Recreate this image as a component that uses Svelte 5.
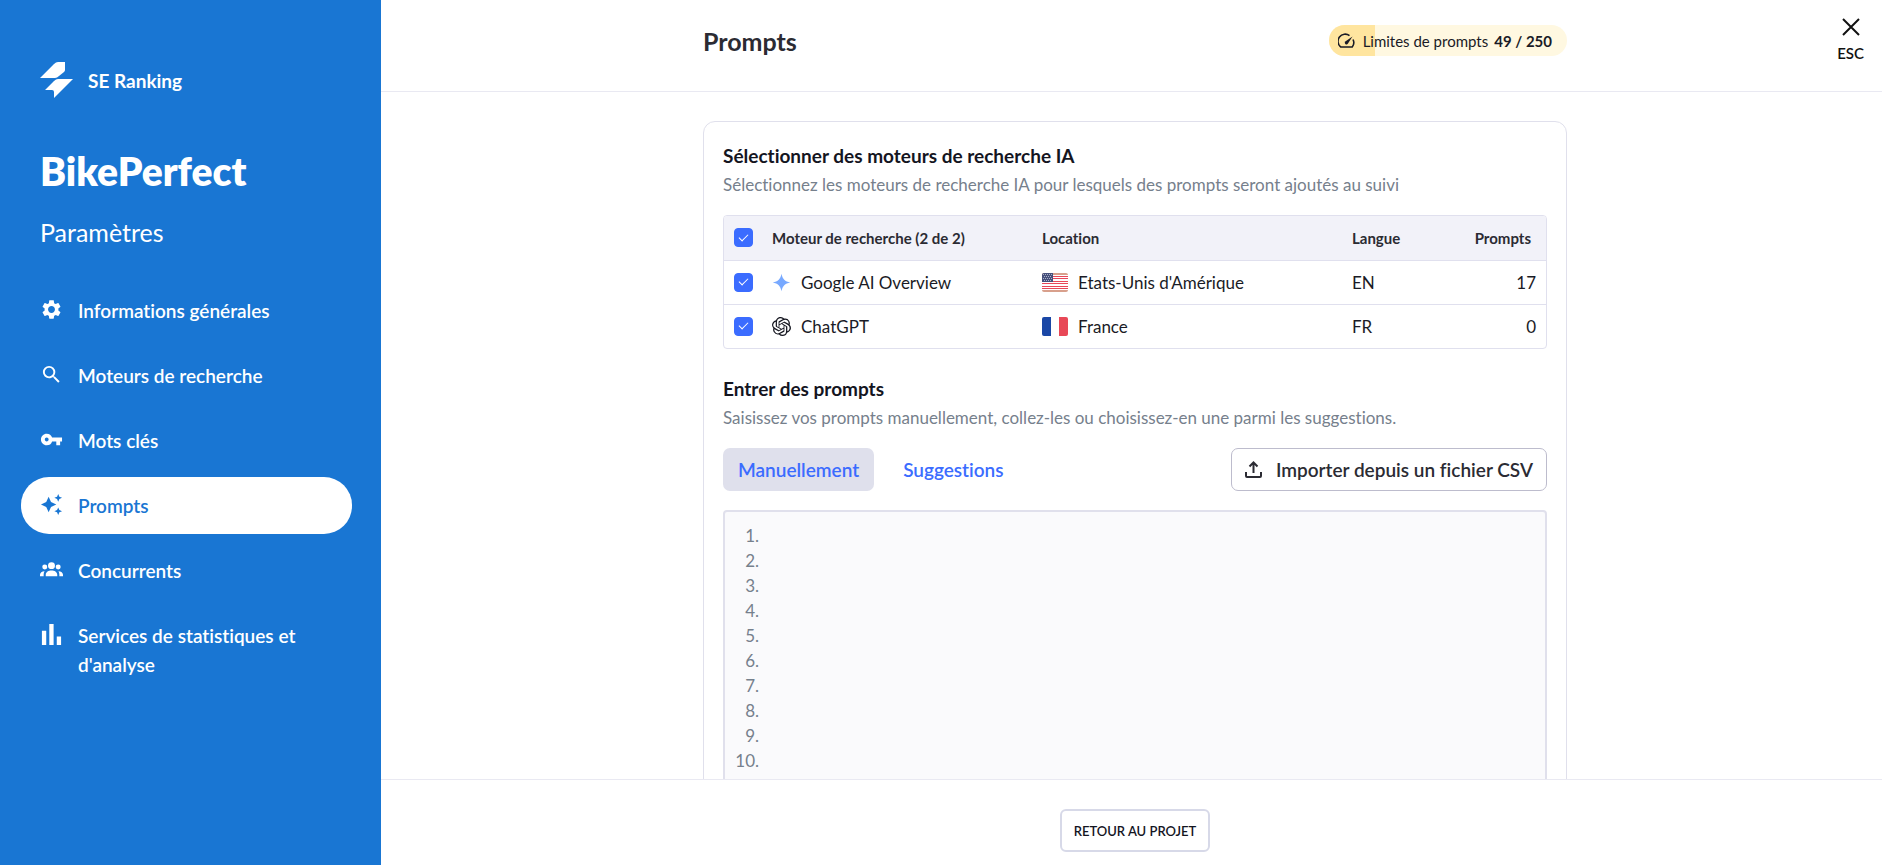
<script lang="ts">
  type Engine = {
    id: string;
    name: string;
    flag: 'us' | 'fr';
    location: string;
    lang: string;
    prompts: number;
    checked: boolean;
  };

  const navItems = [
    { icon: 'settings', label: 'Informations générales' },
    { icon: 'search', label: 'Moteurs de recherche' },
    { icon: 'key', label: 'Mots clés' },
    { icon: 'sparkles', label: 'Prompts' },
    { icon: 'groups', label: 'Concurrents' },
    { icon: 'chart', label: "Services de statistiques et d'analyse" },
  ];

  let activeNav = $state('sparkles');
  let tab = $state<'manual' | 'suggestions'>('manual');
  let promptText = $state('');
  let engines = $state<Engine[]>([
    { id: 'aio', name: 'Google AI Overview', flag: 'us', location: "Etats-Unis d'Amérique", lang: 'EN', prompts: 17, checked: true },
    { id: 'gpt', name: 'ChatGPT', flag: 'fr', location: 'France', lang: 'FR', prompts: 0, checked: true },
  ]);

  const used = 49;
  const limit = 250;
  const minLines = 10;

  let selectedCount = $derived(engines.filter((e) => e.checked).length);
  let lines = $derived(Math.max(minLines, promptText.split('\n').length));

  function toggleAll(event: Event) {
    const on = (event.currentTarget as HTMLInputElement).checked;
    engines.forEach((e) => (e.checked = on));
  }
</script>

<div class="layout">
  <aside class="sidebar">
    <a class="brand" href="#home">
      <svg width="33" height="37" viewBox="0 0 33 37" fill="#fff" aria-hidden="true">
        <path d="M0 16 14 2q2-2 4-2h7v8q0 1-1 2l-5 4q-2 2-4 2z" />
        <path d="M33 17 14 36v-6q0-2-2-2H5l9-9q2-2 4-2z" />
      </svg>
      <span>SE Ranking</span>
    </a>
    <h1>BikePerfect</h1>
    <p class="subtitle">Paramètres</p>

    <nav aria-label="Paramètres">
      {#each navItems as item}
        <a
          href={`#${item.icon}`}
          class:active={item.icon === activeNav}
          aria-current={item.icon === activeNav ? 'page' : undefined}
          onclick={() => (activeNav = item.icon)}
        >
          <svg viewBox="0 0 24 24" fill="currentColor" aria-hidden="true">
            {#if item.icon === 'settings'}
              <path d="M19.14 12.94c.04-.3.06-.61.06-.94 0-.32-.02-.64-.07-.94l2.03-1.58c.18-.14.23-.41.12-.61l-1.92-3.32c-.12-.22-.37-.29-.59-.22l-2.39.96c-.5-.38-1.03-.7-1.62-.94l-.36-2.54c-.04-.24-.24-.41-.48-.41h-3.84c-.24 0-.43.17-.47.41l-.36 2.54c-.59.24-1.13.57-1.62.94l-2.39-.96c-.22-.08-.47 0-.59.22L2.74 8.87c-.12.21-.08.47.12.61l2.03 1.58c-.05.3-.09.63-.09.94s.02.64.07.94l-2.03 1.58c-.18.14-.23.41-.12.61l1.92 3.32c.12.22.37.29.59.22l2.39-.96c.5.38 1.03.7 1.62.94l.36 2.54c.05.24.24.41.48.41h3.84c.24 0 .44-.17.47-.41l.36-2.54c.59-.24 1.13-.56 1.62-.94l2.39.96c.22.08.47 0 .59-.22l1.92-3.32c.12-.22.07-.47-.12-.61l-2.01-1.58zM12 15.6c-1.98 0-3.6-1.62-3.6-3.6s1.62-3.6 3.6-3.6 3.6 1.62 3.6 3.6-1.62 3.6-3.6 3.6z" />
            {:else if item.icon === 'search'}
              <path d="M15.5 14h-.79l-.28-.27A6.47 6.47 0 0 0 16 9.5 6.5 6.5 0 1 0 9.5 16c1.61 0 3.09-.59 4.23-1.57l.27.28v.79l5 4.99L20.49 19l-4.99-5zm-6 0C7.01 14 5 11.99 5 9.5S7.01 5 9.5 5 14 7.01 14 9.5 11.99 14 9.5 14z" />
            {:else if item.icon === 'key'}
              <path d="M12.65 10A5.99 5.99 0 0 0 7 6c-3.31 0-6 2.69-6 6s2.69 6 6 6a5.99 5.99 0 0 0 5.65-4H17v4h4v-4h2v-4H12.65zM7 14c-1.1 0-2-.9-2-2s.9-2 2-2 2 .9 2 2-.9 2-2 2z" />
            {:else if item.icon === 'sparkles'}
              <path d="M9 4l2.5 5.5L17 12l-5.500 2.500L9 20l-2.500-5.500L1 12l5.500-2.500zM19 1l1.200 2.800L23 5l-2.800 1.200L19 9l-1.200-2.800L15 5l2.800-1.200zM19 15l1.200 2.800L23 19l-2.800 1.200L19 23l-1.200-2.800L15 19l2.800-1.200z" />
            {:else if item.icon === 'groups'}
              <circle cx="12" cy="8" r="3.6" />
              <circle cx="5" cy="9.5" r="2.6" />
              <circle cx="19" cy="9.5" r="2.6" />
              <path d="M6 19v-1.500c0-3 3-4.500 6-4.500s6 1.500 6 4.500V19zM0 19v-1.500c0-2.300 2-3.700 4.800-3.800-.7 1-1 2.200-1 3.800V19zM24 19v-1.500c0-2.300-2-3.700-4.800-3.800.7 1 1 2.200 1 3.800V19z" />
            {:else}
              <path d="M2 8h4.500v15H2zM9.700 1h4.500v22H9.700zM17.500 14H22v9h-4.500z" />
            {/if}
          </svg>
          <span>{item.label}</span>
        </a>
      {/each}
    </nav>
  </aside>

  <div class="main">
    <header class="topbar">
      <div class="topbar__inner">
        <h2>Prompts</h2>
        <div class="limits">
          <div class="limits__fill" style={`width: ${(used / limit) * 100}%`}></div>
          <svg width="17" height="16" viewBox="0 0 17 16" fill="none" stroke="currentColor" stroke-width="1.6" aria-hidden="true">
            <path d="M11.500 2.600A7 7 0 0 0 2.800 14h11.400a7 7 0 0 0 .8-7.500" stroke-linejoin="round" />
            <path d="M14.500 3.500 9.800 10.800a1.700 1.700 0 1 1-2.500-2.300z" fill="currentColor" stroke="none" />
          </svg>
          <span>Limites de prompts</span>
          <strong>{used} / {limit}</strong>
        </div>
      </div>
      <button class="close" type="button">
        <svg width="18" height="18" viewBox="0 0 18 18" stroke="currentColor" stroke-width="2" aria-hidden="true">
          <path d="M1 1 17 17M17 1 1 17" />
        </svg>
        <span>ESC</span>
      </button>
    </header>

    <main class="content">
      <section class="card">
        <h3>Sélectionner des moteurs de recherche IA</h3>
        <p class="hint">Sélectionnez les moteurs de recherche IA pour lesquels des prompts seront ajoutés au suivi</p>

        <div class="table-wrap">
          <table>
            <thead>
              <tr>
                <th class="col-check">
                  <input type="checkbox" aria-label="Tout sélectionner" checked={selectedCount === engines.length} onchange={toggleAll} />
                </th>
                <th class="col-engine">Moteur de recherche ({selectedCount} de {engines.length})</th>
                <th>Location</th>
                <th class="col-lang">Langue</th>
                <th class="num">Prompts</th>
              </tr>
            </thead>
            <tbody>
              {#each engines as engine}
                <tr>
                  <td class="col-check"><input type="checkbox" id={engine.id} bind:checked={engine.checked} /></td>
                  <td>
                    <label class="cell" for={engine.id}>
                      {#if engine.id === 'aio'}
                        <svg width="19" height="19" viewBox="0 0 24 24" fill="#78a9ff" aria-hidden="true">
                          <path d="M12 1c1.200 6.500 4.500 9.800 11 11-6.500 1.200-9.800 4.500-11 11-1.200-6.500-4.500-9.800-11-11C7.500 10.800 10.800 7.500 12 1z" />
                        </svg>
                      {:else}
                        <svg width="19" height="19" viewBox="0 0 24 24" fill="#14151f" aria-hidden="true">
                          <path d="M22.2819 9.8211a5.9847 5.9847 0 0 0-.5157-4.9108 6.0462 6.0462 0 0 0-6.5098-2.9A6.0651 6.0651 0 0 0 4.9807 4.1818a5.9847 5.9847 0 0 0-3.9977 2.9 6.0462 6.0462 0 0 0 .7427 7.0966 5.98 5.98 0 0 0 .511 4.9107 6.051 6.051 0 0 0 6.5146 2.9001A5.9847 5.9847 0 0 0 13.2599 24a6.0557 6.0557 0 0 0 5.7718-4.2058 5.9894 5.9894 0 0 0 3.9977-2.9001 6.0557 6.0557 0 0 0-.7475-7.073zm-9.022 12.6081a4.4755 4.4755 0 0 1-2.8764-1.0408l.1419-.0804 4.7783-2.7582a.7948.7948 0 0 0 .3927-.6813v-6.7369l2.02 1.1686a.071.071 0 0 1 .038.052v5.5826a4.504 4.504 0 0 1-4.4945 4.4944zm-9.6607-4.1254a4.4708 4.4708 0 0 1-.5346-3.0137l.142.0852 4.783 2.7582a.7712.7712 0 0 0 .7806 0l5.8428-3.3685v2.3324a.0804.0804 0 0 1-.0332.0615L9.74 19.9502a4.4992 4.4992 0 0 1-6.1408-1.6464zM2.3408 7.8956a4.485 4.485 0 0 1 2.3655-1.9728V11.6a.7664.7664 0 0 0 .3879.6765l5.8144 3.3543-2.0201 1.1685a.0757.0757 0 0 1-.071 0l-4.8303-2.7865A4.504 4.504 0 0 1 2.3408 7.872zm16.5963 3.8558L13.1038 8.364 15.1192 7.2a.0757.0757 0 0 1 .071 0l4.8303 2.7913a4.4944 4.4944 0 0 1-.6765 8.1042v-5.6772a.79.79 0 0 0-.407-.667zm2.0107-3.0231l-.142-.0852-4.7735-2.7818a.7759.7759 0 0 0-.7854 0L9.409 9.2297V6.8974a.0662.0662 0 0 1 .0284-.0615l4.8303-2.7866a4.4992 4.4992 0 0 1 6.6802 4.66zM8.3065 12.863l-2.02-1.1638a.0804.0804 0 0 1-.038-.0567V6.0742a4.4992 4.4992 0 0 1 7.3757-3.4537l-.142.0805L8.704 5.459a.7948.7948 0 0 0-.3927.6813zm1.0976-2.3654l2.602-1.4998 2.6069 1.4998v2.9994l-2.5974 1.4997-2.6067-1.4997Z" />
                        </svg>
                      {/if}
                      <span>{engine.name}</span>
                    </label>
                  </td>
                  <td>
                    <div class="cell">
                      <svg class="flag" width="26" height="19" viewBox="0 0 26 19" aria-hidden="true">
                        {#if engine.flag === 'us'}
                          <path fill="#d8a08c" d="M0 0h26v19H0z" />
                          <path fill="#fff" d="M0 2h26v15H0z" />
                          <path stroke="#e8475a" d="M11 3.500h15M11 5.500h15M11 8.500h15M0 10.500h26M0 13.500h26M0 15.500h26" />
                          <path fill="#46507c" d="M0 0h11v9H0z" />
                          <path stroke="#aab0c8" stroke-dasharray="1 1" d="M1 1.500h9M2 3.500h8M1 5.500h9M2 7.500h8" />
                        {:else}
                          <path fill="#fff" d="M0 0h26v19H0z" />
                          <path fill="#1a47a6" d="M0 0h9v19H0z" />
                          <path fill="#e84857" d="M17 0h9v19h-9z" />
                        {/if}
                      </svg>
                      <span>{engine.location}</span>
                    </div>
                  </td>
                  <td>{engine.lang}</td>
                  <td class="num">{engine.prompts}</td>
                </tr>
              {/each}
            </tbody>
          </table>
        </div>

        <h3>Entrer des prompts</h3>
        <p class="hint">Saisissez vos prompts manuellement, collez-les ou choisissez-en une parmi les suggestions.</p>

        <div class="toolbar">
          <button class="tab" class:selected={tab === 'manual'} type="button" onclick={() => (tab = 'manual')}>Manuellement</button>
          <button class="tab" class:selected={tab === 'suggestions'} type="button" onclick={() => (tab = 'suggestions')}>Suggestions</button>
          <button class="import" type="button">
            <svg width="17" height="17" viewBox="0 0 17 17" fill="none" stroke="currentColor" stroke-width="2" aria-hidden="true">
              <path d="M1 11v4q0 1 1 1h13q1 0 1-1v-4M8.500 12V2M4.500 5.500l4-4 4 4" />
            </svg>
            <span>Importer depuis un fichier CSV</span>
          </button>
        </div>

        <div class="editor">
          <ol aria-hidden="true">
            {#each Array(lines) as _, i}
              <li>{i + 1}.</li>
            {/each}
          </ol>
          <textarea aria-label="Prompts" rows={lines} bind:value={promptText}></textarea>
        </div>
      </section>
    </main>

    <footer class="bottombar">
      <button class="back" type="button">RETOUR AU PROJET</button>
    </footer>
  </div>
</div>

<style>
  :global(body) {
    margin: 0;
    background: #fff;
    color: #1a1b26;
    font-family: Lato, 'Open Sans', 'Liberation Sans', sans-serif;
    font-size: 17px;
    font-variant-ligatures: none;
  }
  h1, h2, h3, p, ol { margin: 0; padding: 0; }
  button, textarea { font: inherit; color: inherit; }
  button { cursor: pointer; }

  .layout {
    display: grid;
    grid-template-columns: 381px minmax(0, 1fr);
    height: 100vh;
    overflow: hidden;
  }

  .sidebar {
    padding: 62px 29px 0 21px;
    background: #1976d3;
    color: #fff;
    overflow: hidden;
  }
  .sidebar a { color: inherit; text-decoration: none; }
  .brand {
    display: flex;
    align-items: center;
    gap: 15px;
    margin-left: 19px;
    font-size: 19px;
    font-weight: 700;
    line-height: 37px;
  }
  h1 {
    margin: 48px 0 0 19px;
    font-size: 39px;
    font-weight: 800;
    line-height: 48px;
  }
  .subtitle {
    margin: 22px 0 0 19px;
    font-size: 25px;
    line-height: 30px;
  }
  nav {
    display: grid;
    gap: 8px;
    margin-top: 35px;
  }
  nav a {
    display: flex;
    align-items: flex-start;
    gap: 15px;
    padding: 14px 19px;
    border-radius: 28px;
    font-size: 19px;
    font-weight: 600;
    line-height: 29px;
  }
  nav a.active { background: #fff; color: #1976d3; }
  nav svg { flex: none; width: 23px; height: 27px; }

  .main {
    display: flex;
    flex-direction: column;
    min-height: 0;
  }
  .topbar {
    display: grid;
    grid-template-columns: 1fr minmax(0, 864px) 1fr;
    padding-left: 7px;
    height: 91px;
    border-bottom: 1px solid #e9e9f2;
  }
  .topbar__inner {
    grid-column: 2;
    display: flex;
    justify-content: space-between;
    align-items: center;
    height: 81px;
  }
  h2 {
    color: #2b2b33;
    font-size: 25px;
    font-weight: 700;
    line-height: 30px;
  }
  .limits {
    position: relative;
    display: flex;
    align-items: center;
    height: 31px;
    padding: 0 15px 0 9px;
    border-radius: 16px;
    background: #fff8e1;
    overflow: hidden;
    font-size: 15px;
  }
  .limits__fill {
    position: absolute;
    inset: 0 auto 0 0;
    background: #ffe59f;
  }
  .limits svg, .limits span, .limits strong { position: relative; }
  .limits span { margin: 0 6px 0 8px; }
  .close {
    justify-self: end;
    align-self: start;
    display: grid;
    justify-items: center;
    gap: 8px;
    margin: 18px 18px 0 0;
    padding: 0;
    border: 0;
    background: none;
    color: #111;
    font-size: 15px;
    font-weight: 600;
    line-height: 18px;
  }

  .content {
    flex: 1;
    min-height: 0;
    overflow-y: auto;
    scrollbar-width: none;
    padding: 29px 0 29px 7px;
  }
  .card {
    box-sizing: border-box;
    max-width: 864px;
    margin: 0 auto;
    padding: 22px 19px;
    border: 1px solid #e0e0ec;
    border-radius: 12px;
  }
  h3 {
    color: #14151f;
    font-size: 19px;
    font-weight: 700;
    line-height: 24px;
  }
  .hint {
    margin-top: 4px;
    color: #76808c;
    line-height: 26px;
  }

  .table-wrap {
    margin: 17px 0 28px;
    border: 1px solid #e0e0ee;
    border-radius: 4px;
    overflow: hidden;
  }
  table {
    width: 100%;
    border-collapse: collapse;
    table-layout: fixed;
  }
  th, td {
    box-sizing: border-box;
    height: 44px;
    padding: 0;
    text-align: left;
  }
  th {
    background: #f2f2f9;
    color: #2b2b33;
    font-size: 15px;
    font-weight: 700;
  }
  tbody td { border-top: 1px solid #e0e0ee; }
  .col-check { width: 48px; padding-left: 10px; }
  .col-engine { width: 270px; }
  .col-lang { width: 114px; }
  .num { width: 80px; text-align: right; }
  th.num { padding-right: 15px; }
  td.num { padding-right: 10px; }
  .cell { display: flex; align-items: center; gap: 10px; }
  .flag { border-radius: 2px; }

  input[type='checkbox'] {
    appearance: none;
    display: grid;
    place-items: center;
    width: 19px;
    height: 19px;
    margin: 0;
    border: 1px solid #b9bacb;
    border-radius: 4px;
  }
  input[type='checkbox']:checked { border-color: #3b6cff; background: #3b6cff; }
  input[type='checkbox']:checked::after {
    content: '';
    width: 8px;
    height: 4px;
    margin-bottom: 3px;
    border: solid #fff;
    border-width: 0 0 1px 1px;
    transform: rotate(-45deg);
  }

  .toolbar {
    display: flex;
    gap: 14px;
    margin: 17px 0 19px;
  }
  .tab, .import {
    height: 43px;
    border-radius: 7px;
    font-size: 19px;
    font-weight: 600;
  }
  .tab {
    padding: 0 15px;
    border: 0;
    background: none;
    color: #3b6cff;
  }
  .tab.selected { background: #dfe0ec; }
  .import {
    display: flex;
    align-items: center;
    gap: 14px;
    margin-left: auto;
    padding: 0 13px;
    border: 1px solid #bdbccd;
    background: #fff;
    color: #2b2b33;
  }

  .editor {
    display: flex;
    min-height: 360px;
    padding: 11px 12px 11px 0;
    border: 2px solid #e0e0ec;
    border-radius: 4px;
    background: #fafafc;
  }
  ol {
    width: 34px;
    list-style: none;
    color: #76808c;
    text-align: right;
    line-height: 25px;
  }
  textarea {
    flex: 1;
    padding: 0 0 0 8px;
    border: 0;
    outline: 0;
    background: none;
    resize: none;
    line-height: 25px;
  }

  .bottombar {
    display: flex;
    justify-content: center;
    padding: 29px 0 13px 7px;
    border-top: 1px solid #e9e9f2;
  }
  .back {
    height: 43px;
    padding: 0 12px;
    border: 2px solid #d7d9e8;
    border-radius: 6px;
    background: #fff;
    color: #14151f;
    font-size: 13px;
    font-weight: 600;
  }
</style>
